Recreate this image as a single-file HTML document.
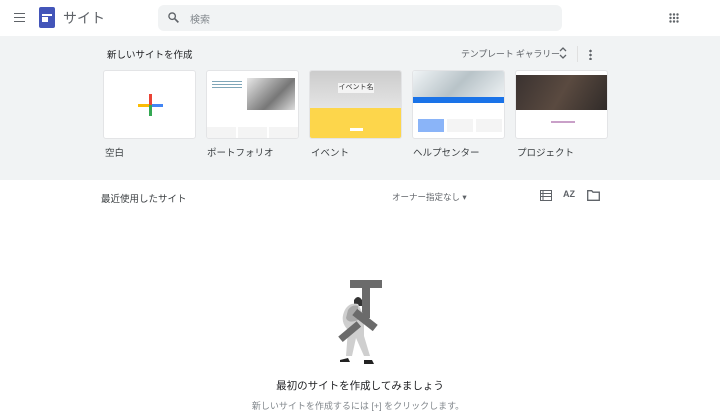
<!DOCTYPE html>
<html><head><meta charset="utf-8"><style>
*{margin:0;padding:0;box-sizing:border-box}
body{width:720px;height:417px;overflow:hidden;background:#fff;font-family:"Liberation Sans","Noto Sans CJK JP",sans-serif;color:#3c4043;position:relative}
.a{position:absolute}
.card{position:absolute;top:70px;width:93px;height:69px;background:#fff;border:1px solid #e3e4e6;border-radius:3px;overflow:hidden}
.lbl{position:absolute;top:145px;font-size:9.5px;color:#3c4043}
</style></head><body>
<div class="a" style="left:14px;top:13px;width:11px;height:9px;border-top:1.5px solid #5f6368;border-bottom:1.5px solid #5f6368"><div style="margin-top:2.5px;height:1.5px;background:#5f6368"></div></div>
<div class="a" style="left:39px;top:7px;width:16px;height:21px;background:#4355b9;border-radius:2px"><div style="position:absolute;left:3px;top:7px;width:10px;height:2px;background:#fff"></div><div style="position:absolute;left:3px;top:10px;width:6px;height:5px;background:#fff"></div></div>
<div class="a" style="left:63px;top:8px;font-size:14px;color:#5f6368">サイト</div>
<div class="a" style="left:158px;top:5px;width:404px;height:26px;background:#f1f3f4;border-radius:6px"></div>
<svg class="a" style="left:167px;top:11px" width="13" height="13" viewBox="0 0 24 24"><circle cx="9.5" cy="9.5" r="6" fill="none" stroke="#5f6368" stroke-width="2.5"/><path d="M14 14l7 7" stroke="#5f6368" stroke-width="3"/></svg>
<div class="a" style="left:190px;top:11px;font-size:10px;color:#80868b">検索</div>
<svg class="a" style="left:669px;top:13px" width="10" height="10" viewBox="0 0 10 10" fill="#5f6368"><circle cx="1.5" cy="1.5" r="1.2"/><circle cx="5" cy="1.5" r="1.2"/><circle cx="8.5" cy="1.5" r="1.2"/><circle cx="1.5" cy="5" r="1.2"/><circle cx="5" cy="5" r="1.2"/><circle cx="8.5" cy="5" r="1.2"/><circle cx="1.5" cy="8.5" r="1.2"/><circle cx="5" cy="8.5" r="1.2"/><circle cx="8.5" cy="8.5" r="1.2"/></svg>
<div class="a" style="left:0;top:36px;width:720px;height:144px;background:#f1f3f4"></div>
<div class="a" style="left:107px;top:47px;font-size:9.5px;color:#202124">新しいサイトを作成</div>
<div class="a" style="left:461px;top:47px;font-size:9px;letter-spacing:-0.2px;color:#5f6368;white-space:nowrap">テンプレート ギャラリー</div>
<svg class="a" style="left:559px;top:47px" width="8" height="12" viewBox="0 0 8 12"><path d="M1 4l3-3 3 3M1 8l3 3 3-3" fill="none" stroke="#5f6368" stroke-width="1.3"/></svg>
<div class="a" style="left:577px;top:46px;width:1px;height:16px;background:#e0e0e0"></div>
<div class="a" style="left:589px;top:49px;width:3px;height:11px;background:radial-gradient(circle,#5f6368 1.2px,transparent 1.4px) 0 0/3px 4px"></div>
<div class="card" style="left:103px"><div class="a" style="left:45px;top:23px;width:3px;height:11px;background:#ea4335"></div><div class="a" style="left:45px;top:34px;width:3px;height:11px;background:#34a853"></div><div class="a" style="left:34px;top:33px;width:11px;height:3px;background:#fbbc04"></div><div class="a" style="left:48px;top:33px;width:11px;height:3px;background:#4285f4"></div></div>
<div class="card" style="left:206px"><div class="a" style="left:40px;top:7px;width:48px;height:32px;background:linear-gradient(135deg,#e8e8e8,#777 60%,#ddd)"></div><div class="a" style="left:5px;top:8px;width:30px;height:10px;background:repeating-linear-gradient(#fff 0 2px,#7fa6b8 2px 3px)"></div><div class="a" style="left:0;top:56px;width:93px;height:13px;background:repeating-linear-gradient(90deg,#f4f4f4 0 29px,#fff 29px 31px)"></div></div>
<div class="card" style="left:309px"><div class="a" style="left:0;top:0;width:93px;height:37px;background:linear-gradient(#ccc,#e4e4e4)"></div><div class="a" style="left:28px;top:12px;width:36px;height:10px;background:#f4f4f4;font-size:7px;text-align:center;color:#333;line-height:10px">イベント名</div><div class="a" style="left:0;top:37px;width:93px;height:32px;background:#fdd64b"></div><div class="a" style="left:40px;top:57px;width:13px;height:3px;background:#fff"></div></div>
<div class="card" style="left:412px"><div class="a" style="left:0;top:0;width:93px;height:26px;background:linear-gradient(135deg,#f0f4f6,#b8c3c8 50%,#eef2f4)"></div><div class="a" style="left:0;top:26px;width:93px;height:6px;background:#1a73e8"></div><div class="a" style="left:5px;top:48px;width:26px;height:13px;background:#8ab4f8"></div><div class="a" style="left:34px;top:48px;width:26px;height:13px;background:#f4f4f4"></div><div class="a" style="left:63px;top:48px;width:26px;height:13px;background:#f4f4f4"></div></div>
<div class="card" style="left:515px"><div class="a" style="left:0;top:4px;width:93px;height:35px;background:linear-gradient(120deg,#3a3230,#5a4a40 50%,#2f2a28)"></div><div class="a" style="left:35px;top:50px;width:24px;height:2px;background:#c9a0c8"></div></div>
<div class="lbl" style="left:105px">空白</div>
<div class="lbl" style="left:207px">ポートフォリオ</div>
<div class="lbl" style="left:311px">イベント</div>
<div class="lbl" style="left:413px">ヘルプセンター</div>
<div class="lbl" style="left:517px">プロジェクト</div>
<div class="a" style="left:101px;top:191px;font-size:9.5px;color:#3c4043">最近使用したサイト</div>
<div class="a" style="left:392px;top:191px;font-size:8.5px;color:#5f6368">オーナー指定なし ▾</div>
<svg class="a" style="left:540px;top:190px" width="12" height="11" viewBox="0 0 12 11"><rect x="0.5" y="0.5" width="11" height="10" fill="none" stroke="#5f6368"/><path d="M0 3.5h12M0 6.5h12M3 0v11" stroke="#5f6368"/></svg>
<div class="a" style="left:563px;top:189px;font-size:9px;color:#5f6368;font-weight:bold">AZ</div>
<svg class="a" style="left:587px;top:190px" width="13" height="11" viewBox="0 0 13 11"><path d="M0.7 0.7h4l1.3 1.5h6.3v8.1H0.7z" fill="none" stroke="#5f6368" stroke-width="1.3"/></svg>
<svg class="a" style="left:334px;top:280px" width="52" height="86" viewBox="0 0 52 86">
<rect x="16" y="0" width="32" height="8" fill="#6b6b6b"/><rect x="28" y="0" width="8" height="38" fill="#6b6b6b"/>
<path d="M20 20 q4 -6 8 0 v6 h-8z" fill="#333"/>
<path d="M10 32 q4 -10 14 -8 l6 12 v20 l6 20 h-6 l-8 -18 l-4 18 h-6 l2 -26 q-8 -8 -4 -18z" fill="#cfcfcf"/>
<path d="M14 30 q4 -6 10 -4 v14 q-10 4 -12 -2z" fill="#a8a8a8"/>
<rect x="18" y="36" width="26" height="8" fill="#6b6b6b" transform="rotate(38 31 40)"/>
<rect x="4" y="48" width="24" height="7" fill="#6b6b6b" transform="rotate(-40 16 52)"/>
<path d="M6 80 l8 -2 l2 4 h-10z M30 80 h8 l2 4 h-10z" fill="#222"/>
</svg>
<div class="a" style="left:0;top:378px;width:720px;text-align:center;font-size:10.5px;color:#202124">最初のサイトを作成してみましょう</div>
<div class="a" style="left:0;top:399px;width:716px;text-align:center;font-size:9px;color:#80868b">新しいサイトを作成するには [+] をクリックします。</div>
</body></html>
